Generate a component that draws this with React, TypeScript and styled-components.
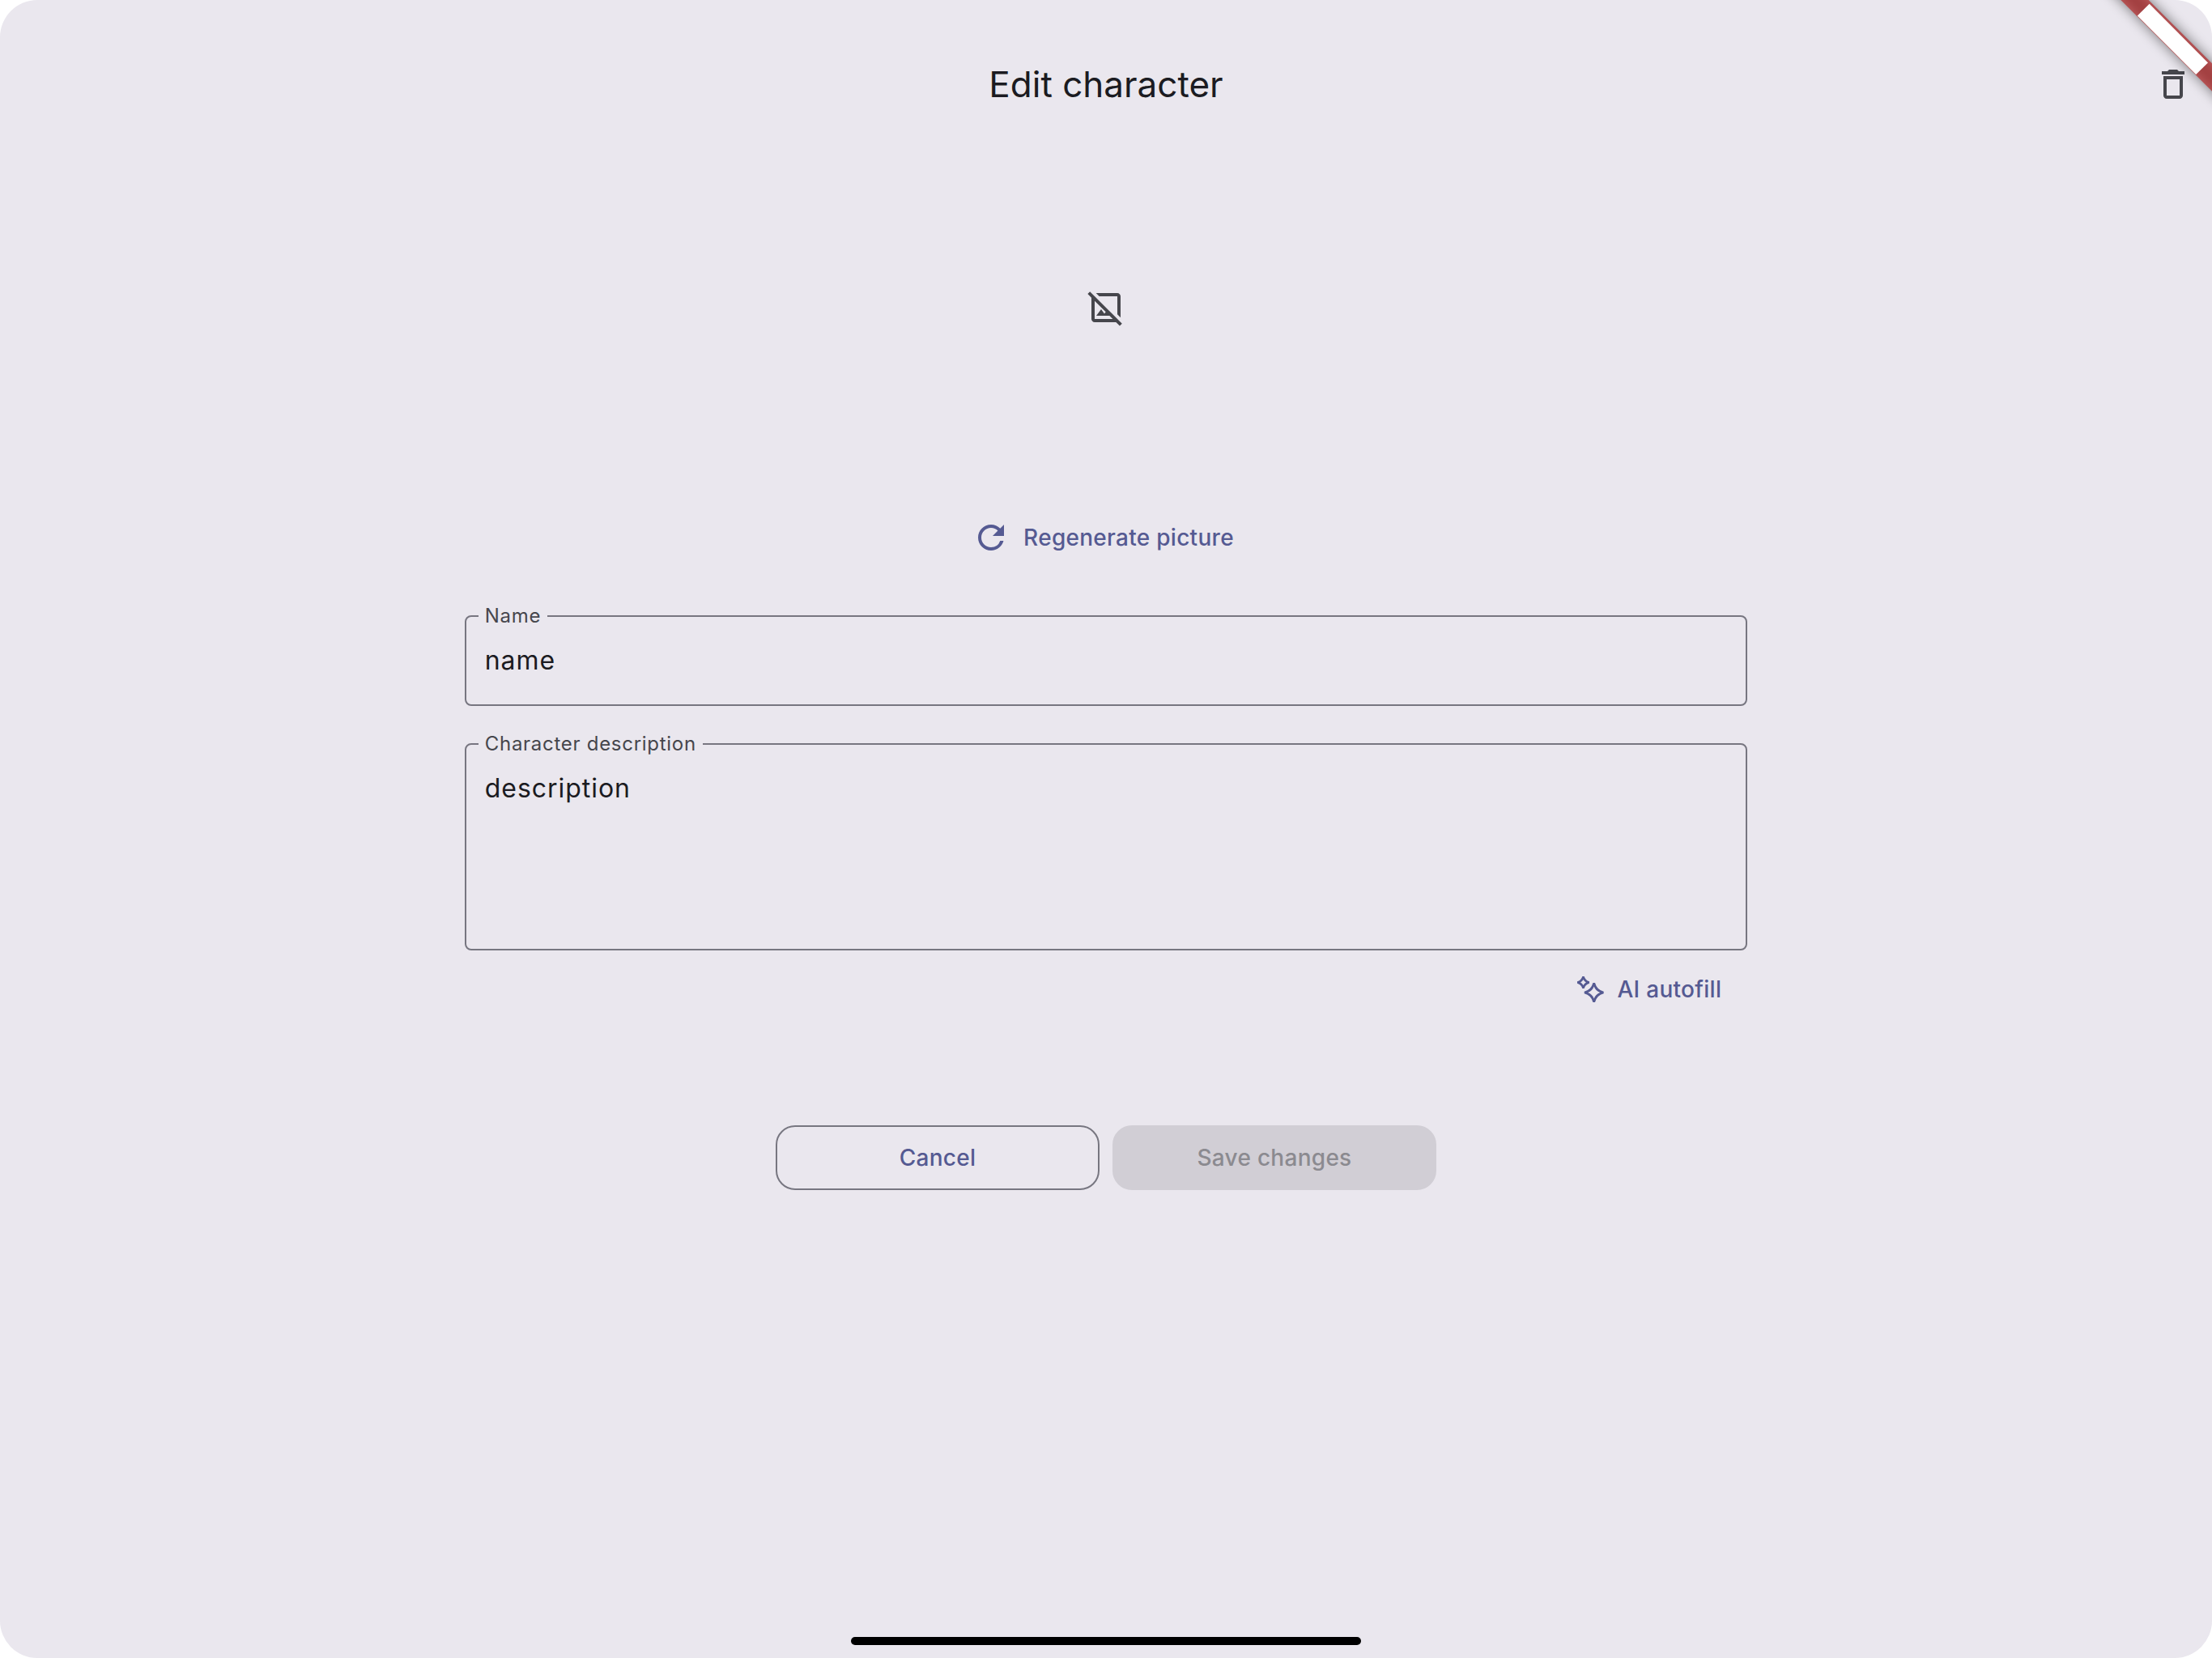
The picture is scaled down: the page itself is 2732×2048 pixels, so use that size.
import React from "react";
import styled, { createGlobalStyle } from "styled-components";
import { MdDeleteOutline, MdOutlineImageNotSupported, MdRefresh } from "react-icons/md";

const color = {
  surface: "#eae7ee",
  text: "#1b1b21",
  muted: "#46464c",
  outline: "#777680",
  primary: "#555a92",
  disabledFill: "#d1ced5",
  disabledText: "#8b8a90",
  ribbon: "#b71c1c",
};

const GlobalStyle = createGlobalStyle`
  * { box-sizing: border-box; }
  body {
    margin: 0;
    background: #ffffff;
    color: ${color.text};
    font-family: Inter, "Liberation Sans", sans-serif;
  }
`;

const Screen = styled.div`
  position: relative;
  display: flex;
  flex-direction: column;
  min-height: 100vh;
  padding-top: 48px;
  overflow: hidden;
  background: ${color.surface};
  border-radius: 46px;
`;

const AppBar = styled.header`
  display: grid;
  grid-template-columns: 96px 1fr 96px;
  align-items: center;
  height: 112px;
`;

const Title = styled.h1`
  grid-column: 2;
  margin: 0;
  text-align: center;
  font-size: 44px;
  font-weight: 400;
  line-height: 56px;
`;

const IconButton = styled.button`
  display: grid;
  place-items: center;
  height: 96px;
  padding: 0;
  border: 0;
  background: none;
  color: ${color.muted};
  font-size: 48px;
`;

const Form = styled.form`
  display: flex;
  flex-direction: column;
  align-items: center;
  flex: 1;
  width: 58%;
  margin: 0 auto;
`;

const Picture = styled.div`
  display: grid;
  place-items: center;
  height: 440px;
  margin-bottom: 16px;
  color: ${color.muted};
  font-size: 48px;
`;

const TextButton = styled.button<{ $end?: boolean }>`
  display: flex;
  align-items: center;
  align-self: ${(p) => (p.$end ? "flex-end" : "center")};
  gap: 16px;
  height: 96px;
  padding: 0 32px 0 24px;
  border: 0;
  background: none;
  color: ${color.primary};
  font: 500 28px/40px Inter, "Liberation Sans", sans-serif;
  letter-spacing: 0.01em;

  > svg {
    flex: none;
  }
`;

const Fields = styled.div`
  display: flex;
  flex-direction: column;
  gap: 32px;
  width: 100%;
  margin-top: 34px;
`;

const Outline = styled.fieldset`
  min-width: 0;
  margin: 0;
  padding: 0 23px 30px;
  border: 2px solid ${color.outline};
  border-radius: 8px;
`;

const Legend = styled.legend`
  margin-left: -8px;
  padding: 0 8px;
  color: ${color.muted};
  font-size: 24px;
  line-height: 30px;
  letter-spacing: 0.03em;
`;

const valueStyle = `
  display: block;
  width: 100%;
  margin: 16px 0 0;
  padding: 0;
  border: 0;
  outline: 0;
  background: none;
  color: ${color.text};
  font: 400 32px/48px Inter, "Liberation Sans", sans-serif;
  letter-spacing: 0.03em;
`;

const Input = styled.input`
  ${valueStyle}
  height: 48px;
`;

const TextArea = styled.textarea`
  ${valueStyle}
  height: 192px;
  resize: none;
`;

const Actions = styled.div`
  display: flex;
  gap: 16px;
  margin-top: 120px;
`;

const ActionButton = styled.button`
  width: 400px;
  height: 80px;
  border: 2px solid ${color.outline};
  border-radius: 24px;
  background: none;
  color: ${color.primary};
  font: 500 28px/40px Inter, "Liberation Sans", sans-serif;
  letter-spacing: 0.01em;

  &:disabled {
    border-color: ${color.disabledFill};
    background: ${color.disabledFill};
    color: ${color.disabledText};
  }
`;

const HomeIndicator = styled.div`
  align-self: center;
  width: 630px;
  height: 10px;
  margin-bottom: 16px;
  border-radius: 5px;
  background: #000000;
`;

const Ribbon = styled.svg`
  position: absolute;
  top: 0;
  right: 0;
  pointer-events: none;
`;

function DebugRibbon() {
  return (
    <Ribbon width="160" height="160" viewBox="0 0 160 160" aria-hidden="true">
      <defs>
        <filter id="ribbon-shadow" x="-50%" y="-50%" width="200%" height="200%">
          <feGaussianBlur stdDeviation="8" />
        </filter>
      </defs>
      <path d="M7.300-40L207.300 160H241.700L41.700-40Z" fill="#000" opacity=".5" filter="url(#ribbon-shadow)" />
      <path d="M7.300-40L207.300 160H241.700L41.700-40Z" fill={color.ribbon} opacity=".63" />
      <path d="M82.700 4.700L155 77.500L140.200 92L67.800 19.500Z" fill="#fff" />
    </Ribbon>
  );
}

function SparkleIcon() {
  return (
    <svg width="36" height="36" viewBox="0 0 36 36" fill="currentColor" fillRule="evenodd" aria-hidden="true">
      <path
        transform="translate(10.5 9.5)"
        d="M-1.200-7.500H1.200Q2.600-2.600 7.500-1.200V1.200Q2.600 2.600 1.200 7.500H-1.200Q-2.600 2.600-7.500 1.200V-1.200Q-2.600-2.600-1.200-7.500ZM0-3.400Q-1.200-1.200-3.400 0Q-1.200 1.200 0 3.400Q1.200 1.200 3.400 0Q1.200-1.200 0-3.400Z"
      />
      <path
        transform="translate(23.7 22)"
        d="M-1.300-12H1.300Q3.500-3.500 12-1.300V1.300Q3.500 3.500 1.300 12H-1.300Q-3.500 3.500-12 1.300V-1.300Q-3.500-3.500-1.300-12ZM0-7.500Q-2-2-7.500 0Q-2 2 0 7.500Q2 2 7.500 0Q2-2 0-7.500Z"
      />
    </svg>
  );
}

export default function App() {
  return (
    <>
      <GlobalStyle />
      <Screen>
        <AppBar>
          <Title>Edit character</Title>
          <IconButton type="button" aria-label="Delete character">
            <MdDeleteOutline />
          </IconButton>
        </AppBar>
        <Form onSubmit={(e) => e.preventDefault()}>
          <Picture>
            <MdOutlineImageNotSupported />
          </Picture>
          <TextButton type="button">
            <MdRefresh size={48} />
            Regenerate picture
          </TextButton>
          <Fields>
            <Outline>
              <Legend>
                <label htmlFor="name">Name</label>
              </Legend>
              <Input id="name" defaultValue="name" />
            </Outline>
            <Outline>
              <Legend>
                <label htmlFor="description">Character description</label>
              </Legend>
              <TextArea id="description" defaultValue="description" />
            </Outline>
          </Fields>
          <TextButton type="button" $end>
            <SparkleIcon />
            AI autofill
          </TextButton>
          <Actions>
            <ActionButton type="button">Cancel</ActionButton>
            <ActionButton type="submit" disabled>
              Save changes
            </ActionButton>
          </Actions>
        </Form>
        <HomeIndicator />
        <DebugRibbon />
      </Screen>
    </>
  );
}
